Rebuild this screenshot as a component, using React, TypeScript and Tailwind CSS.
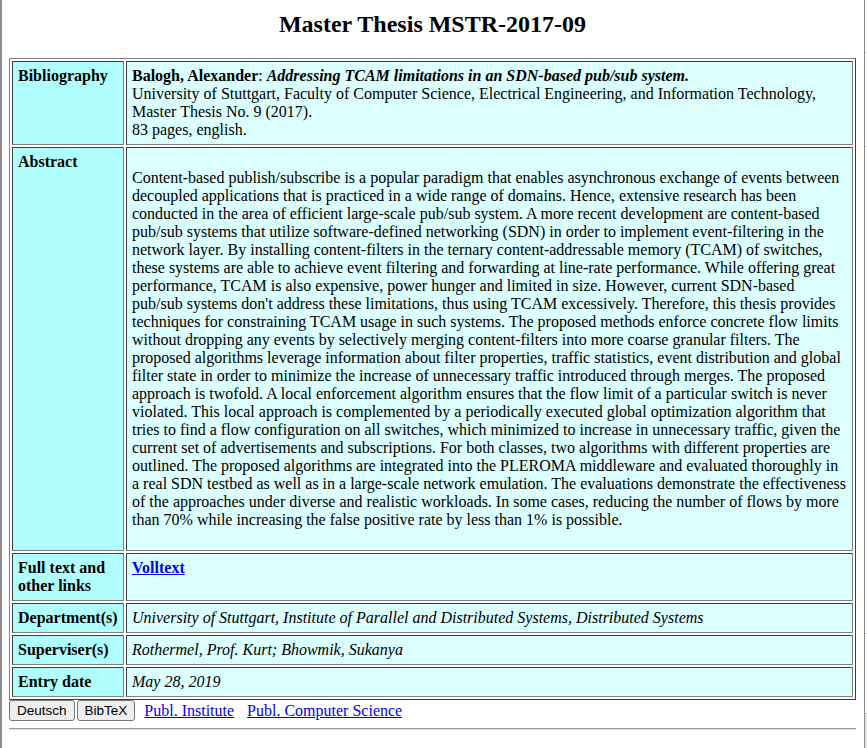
import React from 'react';

const abstractText =
  "Content-based publish/subscribe is a popular paradigm that enables asynchronous exchange of events between decoupled applications that is practiced in a wide range of domains. Hence, extensive research has been conducted in the area of efficient large-scale pub/sub system. A more recent development are content-based pub/sub systems that utilize software-defined networking (SDN) in order to implement event-filtering in the network layer. By installing content-filters in the ternary content-addressable memory (TCAM) of switches, these systems are able to achieve event filtering and forwarding at line-rate performance. While offering great performance, TCAM is also expensive, power hunger and limited in size. However, current SDN-based pub/sub systems don't address these limitations, thus using TCAM excessively. Therefore, this thesis provides techniques for constraining TCAM usage in such systems. The proposed methods enforce concrete flow limits without dropping any events by selectively merging content-filters into more coarse granular filters. The proposed algorithms leverage information about filter properties, traffic statistics, event distribution and global filter state in order to minimize the increase of unnecessary traffic introduced through merges. The proposed approach is twofold. A local enforcement algorithm ensures that the flow limit of a particular switch is never violated. This local approach is complemented by a periodically executed global optimization algorithm that tries to find a flow configuration on all switches, which minimized to increase in unnecessary traffic, given the current set of advertisements and subscriptions. For both classes, two algorithms with different properties are outlined. The proposed algorithms are integrated into the PLEROMA middleware and evaluated thoroughly in a real SDN testbed as well as in a large-scale network emulation. The evaluations demonstrate the effectiveness of the approaches under diverse and realistic workloads. In some cases, reducing the number of flows by more than 70% while increasing the false positive rate by less than 1% is possible.";

// inset cell border like the old border="1" tables
const cell =
  'border border-t-[#3f3f3f] border-l-[#3f3f3f] border-r-[#808080] border-b-[#808080] p-[5px] align-top';
const head = `${cell} w-[112px] bg-[#b0ffff] font-bold`;
const data = `${cell} bg-[#dcffff]`;

function Row({ label, children }: { label: React.ReactNode; children: React.ReactNode }) {
  return (
    <tr>
      <td className={head}>{label}</td>
      <td className={data}>{children}</td>
    </tr>
  );
}

function Button({ children }: { children: React.ReactNode }) {
  return (
    <button className="h-[21px] rounded-[3px] border border-[#767676] bg-[#efefef] px-[7px] font-['Liberation_Sans',Arial,sans-serif] text-[13.5px] leading-[17px] text-black">
      {children}
    </button>
  );
}

export default function App() {
  return (
    <div className="flex h-[748px] w-[867px] overflow-hidden bg-white font-['Liberation_Serif','Times_New_Roman',serif] text-[16px] leading-[18px] text-black">
      <div className="w-[864px] shrink-0 border-l-2 border-[#8c8c8c] pl-[7px] pr-[8px]">
        <h2 className="mb-[20px] pt-[11px] text-center text-[24px] font-bold leading-[27px]">
          Master Thesis MSTR-2017-09
        </h2>

        <table className="w-full border-separate border-spacing-[2px] border border-t-[#808080] border-l-[#808080] border-r-[#3f3f3f] border-b-[#3f3f3f]">
          <tbody>
            <Row label="Bibliography">
              <b>Balogh, Alexander</b>:{' '}
              <b>
                <i>Addressing TCAM limitations in an SDN-based pub/sub system.</i>
              </b>
              <br />
              University of Stuttgart, Faculty of Computer Science, Electrical Engineering, and
              Information Technology,
              <br />
              Master Thesis No. 9 (2017).
              <br />
              83 pages, english.
            </Row>
            <Row label="Abstract">
              <p className="my-[16px]">{abstractText}</p>
            </Row>
            <Row
              label={
                <>
                  Full text and
                  <br />
                  other links
                </>
              }
            >
              <a href="#" className="font-bold text-[#0000ee] underline">
                Volltext
              </a>
            </Row>
            <Row label="Department(s)">
              <i>University of Stuttgart, Institute of Parallel and Distributed Systems, Distributed Systems</i>
            </Row>
            <Row label="Superviser(s)">
              <i>Rothermel, Prof. Kurt; Bhowmik, Sukanya</i>
            </Row>
            <Row label="Entry date">
              <i>May 28, 2019</i>
            </Row>
          </tbody>
        </table>

        <div className="flex items-center">
          <Button>Deutsch</Button>
          <div className="ml-[2px]">
            <Button>BibTeX</Button>
          </div>
          <a href="#" className="ml-[9px] text-[#0000ee] underline">
            Publ. Institute
          </a>
          <a href="#" className="ml-[13px] text-[#0000ee] underline">
            Publ. Computer Science
          </a>
        </div>

        <div className="mt-[7px] border-t border-b border-t-[#9a9a9a] border-b-[#e0e0e0]" />
      </div>

      {/* edge of the neighbouring frame */}
      <div className="flex w-[3px] shrink-0 flex-col border-l border-[#8a8a8a] bg-[#f7f7f7]">
        <div className="h-[52px]" />
        <div className="h-px bg-[#dcdcdc]" />
        <div className="h-[93px]" />
        <div className="h-px bg-[#dcdcdc]" />
        <div className="h-[486px]" />
        <div className="h-px bg-[#dcdcdc]" />
        <div className="h-[79px]" />
        <div className="h-px bg-[#d0d0d0]" />
        <div className="flex-1 bg-[#e6e6e6]" />
      </div>
    </div>
  );
}
